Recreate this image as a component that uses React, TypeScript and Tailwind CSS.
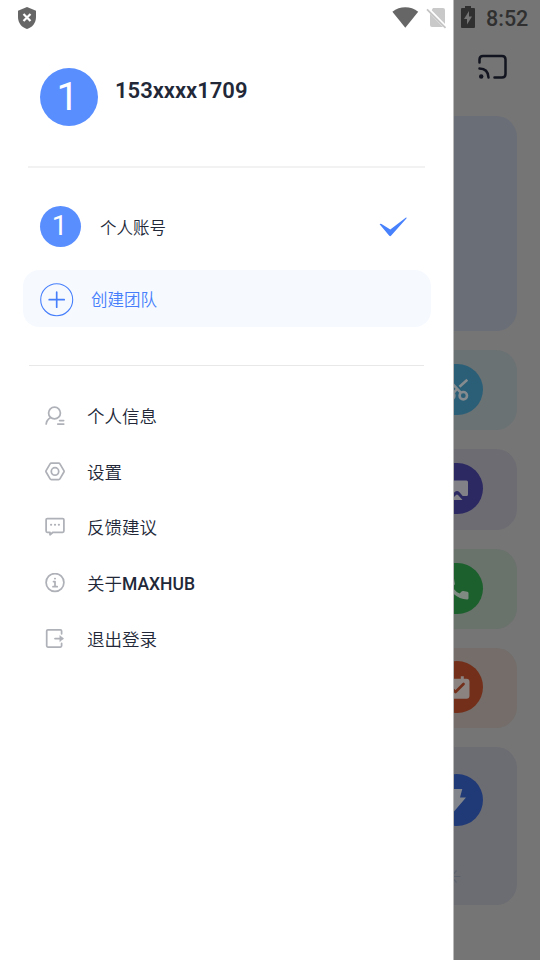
import React from "react";

const font = "font-[Roboto,'Noto_Sans_CJK_SC',sans-serif]";

function Shield() {
  return (
    <svg className="ml-[18px] mt-[7px] h-[22px] w-[18px]" viewBox="0 0 18 22">
      <path d="M9 0 18 3.800V10c0 6-3.800 10.500-9 12C3.800 20.500 0 16 0 10V3.800Z" fill="#666" />
      <path d="m5.500 7 7 7m0-7-7 7" stroke="#fff" strokeWidth="2.200" />
    </svg>
  );
}

function Signals() {
  return (
    <svg className="ml-auto mr-[6px] mt-[6px] h-[24px] w-[56px]" viewBox="0 0 56 24">
      <path d="M1.400 5.700C9-.2 19.600-.2 27.200 5.700L14.300 21.700Z" fill="#666" />
      <path d="M43 2h10q2 0 2 2v15q0 2-2 2H42q-2 0-2-2V7Z" fill="#c9c9c9" transform="translate(-1 0)" />
      <path d="m35.500 1.500 20 20.500" stroke="#fff" strokeWidth="3.600" />
      <path d="m36 3.400 18.500 18.400" stroke="#c4c4c4" strokeWidth="1.800" />
    </svg>
  );
}

const line = { fill: "none", stroke: "#afb1b8", strokeWidth: 1.75, strokeLinecap: "round", strokeLinejoin: "round" } as const;

const menu = [
  {
    label: "个人信息",
    box: "0 -1 20 20",
    icon: (
      <g {...line}>
        <circle cx="9.500" cy="7" r="5.900" />
        <path d="M5.300 11.700C2.800 13.200 1.400 15.400 1.200 18M14.600 14.600h4M12.800 18h5.900" />
      </g>
    ),
  },
  {
    label: "设置",
    box: "0 -1 20 20",
    icon: (
      <g {...line}>
        <path d="M6.300 1.200h7.400q.8 0 1.200.7l4 6.700q.4.700 0 1.400l-4 6.900q-.4.700-1.200.7H6.300q-.8 0-1.200-.7l-4-6.900q-.4-.7 0-1.400l4-6.700q.4-.7 1.200-.7Z" />
        <circle cx="10" cy="9.400" r="3.700" />
      </g>
    ),
  },
  {
    label: "反馈建议",
    box: "0 0 20 20",
    icon: (
      <g {...line}>
        <path d="M2.300 1.500h15.400q1.200 0 1.200 1.200v11.400q0 1.200-1.200 1.200H8l-3 2.400v-2.400H2.300q-1.200 0-1.200-1.200V2.700Q1.100 1.500 2.300 1.500Z" />
        <path d="M6 7.800h.2m3.700 0h.2m3.700 0h.2" strokeWidth="2" />
      </g>
    ),
  },
  {
    label: "关于MAXHUB",
    box: "0 .5 20 20",
    icon: (
      <g {...line}>
        <circle cx="10" cy="10" r="8.900" />
        <path d="M8.500 9H10v5M8 14.200h4.200" />
        <path d="M9.900 6.100h.2" strokeWidth="1.900" />
      </g>
    ),
  },
  {
    label: "退出登录",
    box: "0 1 20 20",
    icon: (
      <g {...line}>
        <path d="M16.600 5.800V3.100q0-1.200-1.200-1.200H2.900q-1.200 0-1.200 1.200v14.700q0 1.200 1.200 1.200h12.500q1.200 0 1.200-1.200v-2.500M10 10.500h7.700" />
        <path d="m15 7.800 3.300 2.700-3.300 2.900Z" fill="#afb1b8" strokeWidth=".6" />
      </g>
    ),
  },
];

const tiles = [
  {
    name: "cut",
    tile: "mt-[19px] h-[80px] bg-[#6b7274]",
    disc: "bg-[#2b5f77]",
    icon: (
      <g fill="none" stroke="#858b8e" strokeWidth="2.600">
        <circle cx="32.300" cy="31.700" r="3.700" />
        <circle cx="19.700" cy="31.700" r="3.700" />
        <path d="m29.800 28.700-12-13M28.500 22.700l7.800-7M26 25l-3.500 4" />
      </g>
    ),
  },
  {
    name: "screen",
    tile: "mt-[19px] h-[81px] bg-[#6e6c73]",
    disc: "bg-[#2c2962]",
    icon: (
      <g fill="#828187">
        <path d="M15 17.500h20.500q1.500 0 1.500 1.500v12.500q0 1.500-1.500 1.500h-3.800l-3.200-3.700q-2.500-2.500-5 0L20 33h-5V17.500Z" />
        <path d="m20 37 5-5q1-.9 2 0l4.500 5Z" />
      </g>
    ),
  },
  {
    name: "phone",
    tile: "mt-[19px] h-[80px] bg-[#6a726c]",
    disc: "bg-[#1c602d]",
    icon: <path d="M19 15.500h3q1 0 1.200 1.200l.8 4.600-2.500 2.600q2.500 4.700 7.100 6.600l2.300-2.200q.6-.5 1.400-.4l4 .8q1.200.2 1.200 1.300v5.200q0 1.300-1.400 1.300C25 36 16.500 27 16.500 18q0-2.500 2.500-2.500Z" fill="#7f8b82" />,
  },
  {
    name: "calendar",
    tile: "mt-[19px] h-[80px] bg-[#746d69]",
    disc: "bg-[#732f19]",
    icon: (
      <g>
        <path d="M15 17.700h14.800v-2.500h3v2.500h2.700q3 0 3 3v14q0 3-3 3H15Z" fill="#8b8380" />
        <path d="m20.500 27 4 4 8-8" fill="none" stroke="#732f19" strokeWidth="2.600" strokeLinecap="round" strokeLinejoin="round" />
      </g>
    ),
  },
  {
    name: "bolt",
    tile: "mt-[19px] h-[158px] bg-[#6c6d73]",
    disc: "bg-[#203a77]",
    icon: <path d="M20 15h11.300l-2.300 8.500h6L20 41Z" fill="#82858c" />,
  },
];

export default function App() {
  return (
    <div className={`${font} flex h-[960px] w-[540px] overflow-hidden bg-[#757575] text-[#222838]`}>
      <aside className="flex w-[454px] shrink-0 flex-col border-r border-[#bababa] bg-white">
        <header className="flex h-[36px] items-start">
          <Shield />
          <Signals />
        </header>

        <section className="mt-[32px] flex h-[58px] pl-[40px]">
          <div className="flex size-[58px] justify-center rounded-full bg-[#598eff] pr-[3px] text-[39.500px] leading-[57px] text-white">1</div>
          <h1 className="ml-[17px] mt-[8px] text-[22px] leading-[30px] font-semibold">153xxxx1709</h1>
        </section>
        <div className="ml-[28px] mt-[40px] h-[2px] w-[397px] bg-[#f2f2f2]" />

        <section className="mt-[38px] flex h-[41px] items-center pl-[40px]">
          <div className="flex size-[41px] justify-center rounded-full bg-[#598eff] pr-[2px] text-[28px] leading-[39px] text-white">1</div>
          <span className="ml-[19px] mt-[4px] text-[16.500px] leading-[24px] font-[350]">个人账号</span>
          <svg className="ml-auto mr-[46px] h-[20px] w-[28px]" viewBox="0 0 28 20">
            <path d="M.6 7.300Q1.300 6.400 2.500 7l8.800 5.500L27 .4q1 0 .6.800L12 18.800q-.8.900-1.700 0Z" fill="#4881fc" />
          </svg>
        </section>

        <section className="ml-[23px] mt-[23px] flex h-[57px] w-[408px] items-center rounded-[16px] bg-[#f6faff] text-[#477ffb]">
          <svg className="ml-[17px] mt-[2px] size-[34px]" viewBox="0 0 34 34" fill="none" stroke="#477ffb">
            <circle cx="16.700" cy="16.700" r="16" strokeWidth="1.100" />
            <path d="M16.700 9.200v15M9.200 16.700h15" strokeWidth="1.700" strokeLinecap="round" />
          </svg>
          <span className="ml-[17px] mt-[5px] text-[16.500px] leading-[24px] font-[350]">创建团队</span>
        </section>
        <div className="ml-[29px] mt-[38px] h-px w-[395px] bg-[#e8e8e8]" />

        <nav className="mt-[22px]">
          {menu.map((item) => (
            <div key={item.label} className="flex h-[55.800px] items-center pl-[45px]">
              <svg className="mb-px size-[20px]" viewBox={item.box}>{item.icon}</svg>
              <span className="ml-[22px] mt-[2px] text-[17.500px] leading-[26px] font-[350]">
                {item.label.replace("MAXHUB", "")}
                {item.label.endsWith("MAXHUB") && <span className="font-medium">MAXHUB</span>}
              </span>
            </div>
          ))}
        </nav>
      </aside>

      <main className="flex w-[86px] flex-col overflow-hidden">
        <div className="flex h-[36px] items-start pt-[6px]">
          <svg className="ml-[7px] h-[22px] w-[14px]" viewBox="0 0 14 22">
            <path d="M4 0h6v2h3q1 0 1 1v18q0 1-1 1H1q-1 0-1-1V3q0-1 1-1h3Z" fill="#303030" />
            <path d="M8 5 3 13h3v5.500L11 10.500H8Z" fill="#757575" />
          </svg>
          <span className="ml-[11px] text-[21.500px] leading-[26px] font-medium text-[#303030]">8:52</span>
        </div>
        <svg className="ml-[24px] mt-[18px] h-[26px] w-[30px]" viewBox="0 0 30 26" fill="none" stroke="#12151f" strokeWidth="2.500" strokeLinecap="round">
          <path d="M1.500 8.500V5.500q0-3.500 3.500-3.500h19q3.500 0 3.500 3.500v14.500q0 3.500-3.500 3.500h-7.500" />
          <path d="M1.500 14.500q8.500 0 9 9" />
          <circle cx="3.200" cy="22.500" r="2.200" fill="#12151f" stroke="none" />
        </svg>
        <div className="mt-[36px] h-[215px] w-[63px] shrink-0 rounded-r-[21px] bg-[#6a6e77]" />
        {tiles.map((t) => (
          <div key={t.name} className={`${t.tile} flex w-[63px] shrink-0 flex-col overflow-hidden rounded-r-[21px]`}>
            <div className={`${t.disc} -ml-[23px] ${t.name === "bolt" ? "mt-[27px]" : t.name === "calendar" ? "mt-[13px]" : "mt-[13.500px]"} size-[51.500px] shrink-0 rounded-full`}>
              <svg className="size-[52px]" viewBox="0 0 52 52">{t.icon}</svg>
            </div>
            {t.name === "bolt" && (
              <svg className="mt-[43px] h-[16px] w-[8px] shrink-0" viewBox="0 0 8 16" fill="none" stroke="#5b626c" strokeWidth="1.200">
                <path d="M0 7.500h6.500M0 4.500l2.500-3M0 10.500l2.500 3" />
              </svg>
            )}
          </div>
        ))}
      </main>
    </div>
  );
}
